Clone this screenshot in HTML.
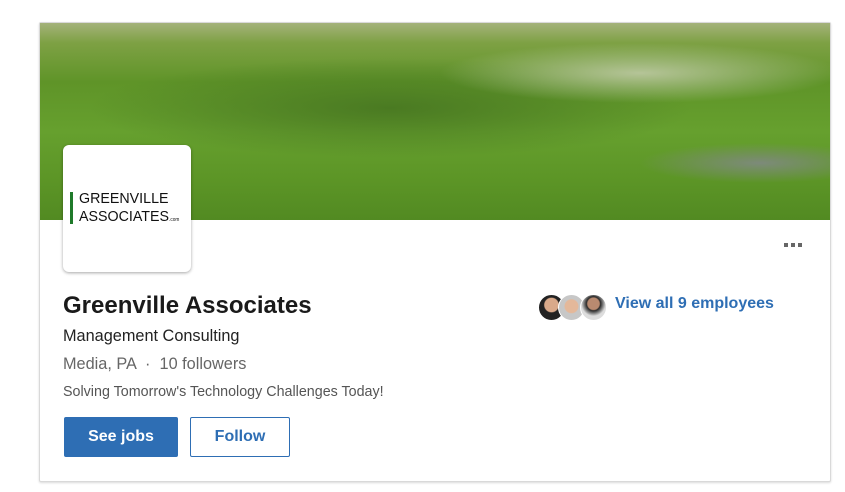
<!DOCTYPE html>
<html><head><style>
body{margin:0;background:#fff;width:845px;height:492px;position:relative;font-family:"Liberation Sans",Arial,sans-serif;overflow:hidden}
.card{position:absolute;left:39px;top:22px;width:790px;height:458px;border:1px solid #d9d9d9;border-radius:2px;box-shadow:0 1px 2px rgba(0,0,0,.15);background:#fff}
.banner{position:absolute;left:40px;top:23px;width:790px;height:197px;background:
radial-gradient(ellipse 200px 30px at 600px 50px,#b5c498 0%,rgba(160,180,120,0) 100%),
radial-gradient(ellipse 300px 50px at 350px 85px,#4a7a22 0%,rgba(60,100,30,0) 100%),
radial-gradient(ellipse 120px 20px at 720px 140px,#7d8a7a 0%,rgba(100,110,100,0) 100%),
linear-gradient(180deg,#a4b27a 0%,#7ea144 10%,#5f9428 30%,#66a02e 55%,#5c9526 80%,#528a22 100%)}
.logo{position:absolute;left:63px;top:145px;width:128px;height:127px;background:#fff;border-radius:6px;box-shadow:0 1px 3px rgba(0,0,0,.35)}
.bar{position:absolute;left:70px;top:192px;width:3px;height:32px;background:#1f7a2a}
.lt{position:absolute;left:79px;top:190px;font-size:15px;line-height:18px;color:#111;transform:scaleX(.95);transform-origin:left}
.dots{position:absolute;left:784px;top:243px;display:flex;gap:3px}
.dots i{display:block;width:4px;height:4px;background:#666}
h1{position:absolute;left:63px;top:292px;margin:0;font-size:24px;font-weight:bold;color:#1a1a1a}
.t{position:absolute;left:63px;color:#222}
.btn{position:absolute;top:417px;height:40px;box-sizing:border-box;font-weight:bold;font-size:16px;display:flex;align-items:center;justify-content:center;border-radius:2px}
.av{position:absolute;top:294px;width:25px;height:25px;border-radius:50%;border:1px solid #fff}
</style></head><body>
<div class="card"></div>
<div class="banner"></div>
<div class="logo"></div>
<div class="bar"></div>
<div class="lt">GREENVILLE<br>ASSOCIATES<span style="font-size:5px">.com</span></div>
<div class="dots"><i></i><i></i><i></i></div>
<h1>Greenville Associates</h1>
<div class="t" style="top:327px;font-size:16.3px">Management Consulting</div>
<div class="t" style="top:355px;font-size:16.3px;color:#666">Media, PA &nbsp;·&nbsp; 10 followers</div>
<div class="t" style="top:384px;font-size:14.3px;color:#555">Solving Tomorrow's Technology Challenges Today!</div>
<div class="btn" style="left:64px;width:114px;background:#2e6eb4;color:#fff">See jobs</div>
<div class="btn" style="left:190px;width:100px;border:1px solid #2e6eb4;color:#2e6eb4;background:#fff">Follow</div>
<div class="av" style="left:538px;background:radial-gradient(circle at 50% 40%,#d9a98a 35%,#222 40%)"></div>
<div class="av" style="left:558px;background:radial-gradient(circle at 50% 45%,#e4b89a 35%,#c7c7c7 40%)"></div>
<div class="av" style="left:580px;background:radial-gradient(circle at 50% 35%,#b98a70 28%,#2a2a2a 34%,#ddd 60%)"></div>
<div style="position:absolute;left:615px;top:295px;font-size:16px;font-weight:bold;color:#2e6eb4">View all 9 employees</div>
</body></html>
